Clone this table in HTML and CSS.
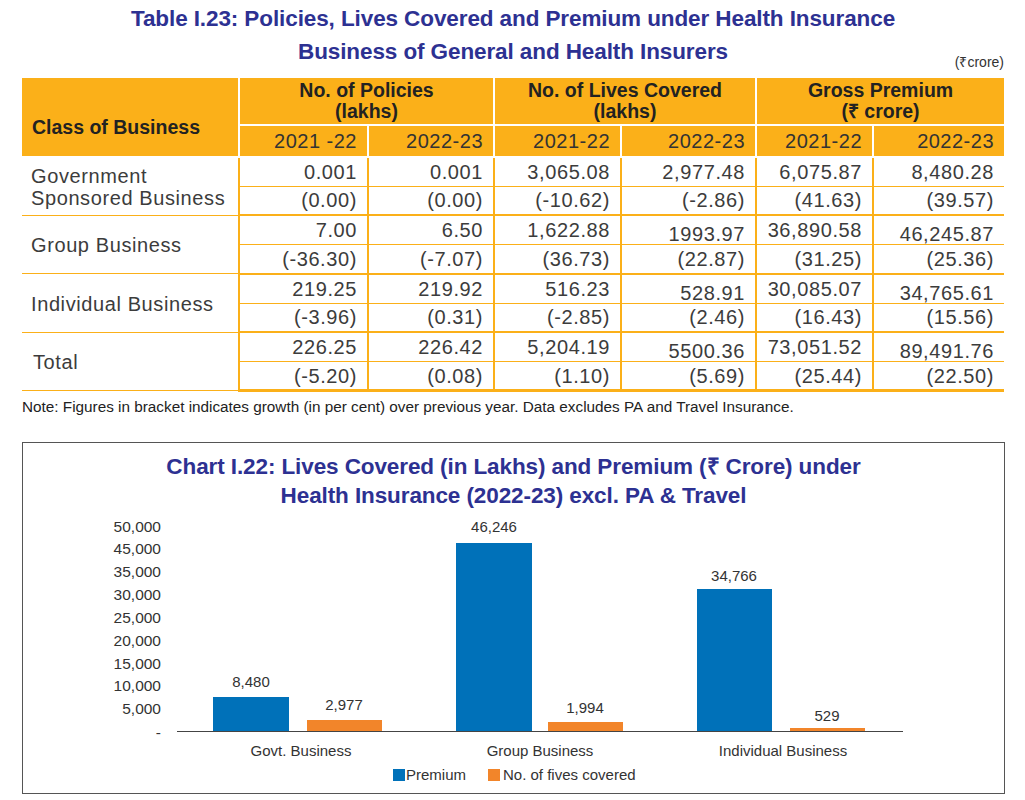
FILE: index.html
```html
<!DOCTYPE html>
<html>
<head>
<meta charset="utf-8">
<link rel="stylesheet" href="styles.css">
</head>
<body>
<div class="page">
  <h1 class="title">Table I.23: Policies, Lives Covered and Premium under Health Insurance<br>Business of General and Health Insurers</h1>
  <div class="unit">(₹crore)</div>
  <table class="tbl">
    <colgroup>
      <col class="c0"><col class="c1"><col class="c2"><col class="c3"><col class="c4"><col class="c5"><col class="c6">
    </colgroup>
    <thead>
      <tr class="h1row">
        <th rowspan="2" class="cls">Class of Business</th>
        <th colspan="2" class="grp">No. of Policies<br>(lakhs)</th>
        <th colspan="2" class="grp">No. of Lives Covered<br>(lakhs)</th>
        <th colspan="2" class="grp last">Gross Premium<br>(₹ crore)</th>
      </tr>
      <tr class="h2row">
        <th class="yr">2021 -22</th><th class="yr">2022-23</th>
        <th class="yr">2021-22</th><th class="yr">2022-23</th>
        <th class="yr">2021-22</th><th class="yr last">2022-23</th>
      </tr>
    </thead>
    <tbody>
      <tr class="top">
        <td rowspan="2" class="lbl">Government<br>Sponsored Business</td>
        <td>0.001</td><td>0.001</td><td>3,065.08</td><td>2,977.48</td><td>6,075.87</td><td class="last">8,480.28</td>
      </tr>
      <tr class="sub">
        <td>(0.00)</td><td>(0.00)</td><td>(-10.62)</td><td>(-2.86)</td><td>(41.63)</td><td class="last">(39.57)</td>
      </tr>
      <tr class="top">
        <td rowspan="2" class="lbl">Group Business</td>
        <td>7.00</td><td>6.50</td><td>1,622.88</td><td class="low">1993.97</td><td>36,890.58</td><td class="last low">46,245.87</td>
      </tr>
      <tr class="sub">
        <td>(-36.30)</td><td>(-7.07)</td><td>(36.73)</td><td>(22.87)</td><td>(31.25)</td><td class="last">(25.36)</td>
      </tr>
      <tr class="top">
        <td rowspan="2" class="lbl">Individual Business</td>
        <td>219.25</td><td>219.92</td><td>516.23</td><td class="low">528.91</td><td>30,085.07</td><td class="last low">34,765.61</td>
      </tr>
      <tr class="sub">
        <td>(-3.96)</td><td>(0.31)</td><td>(-2.85)</td><td>(2.46)</td><td>(16.43)</td><td class="last">(15.56)</td>
      </tr>
      <tr class="top">
        <td rowspan="2" class="lbl total">Total</td>
        <td>226.25</td><td>226.42</td><td>5,204.19</td><td class="low">5500.36</td><td>73,051.52</td><td class="last low">89,491.76</td>
      </tr>
      <tr class="sub end">
        <td>(-5.20)</td><td>(0.08)</td><td>(1.10)</td><td>(5.69)</td><td>(25.44)</td><td class="last">(22.50)</td>
      </tr>
    </tbody>
  </table>
  <p class="note">Note: Figures in bracket indicates growth (in per cent) over previous year. Data excludes PA and Travel Insurance.</p>

  <div class="chart">
    <h2 class="ctitle">Chart I.22: Lives Covered (in Lakhs) and Premium (₹ Crore) under<br>Health Insurance (2022-23) excl. PA &amp; Travel</h2>
    <svg class="plot" width="980" height="283" viewBox="0 0 980 283">
      <g class="ylab">
        <text x="138" y="22">50,000</text>
        <text x="138" y="44">45,000</text>
        <text x="138" y="67">35,000</text>
        <text x="138" y="90">30,000</text>
        <text x="138" y="113">25,000</text>
        <text x="138" y="136">20,000</text>
        <text x="138" y="159">15,000</text>
        <text x="138" y="181">10,000</text>
        <text x="138" y="204">5,000</text>
        <text x="138" y="228">-</text>
      </g>
      <rect class="blue" x="190" y="187" width="76" height="34"/>
      <rect class="orange" x="284" y="210" width="75" height="11"/>
      <rect class="blue" x="433" y="33" width="76" height="188"/>
      <rect class="orange" x="525" y="212" width="75" height="9"/>
      <rect class="blue" x="674" y="79" width="75" height="142"/>
      <rect class="orange" x="767" y="218" width="75" height="3"/>
      <line class="axis" x1="154" y1="221.5" x2="880" y2="221.5"/>
      <g class="vlab">
        <text x="228" y="177">8,480</text>
        <text x="321" y="200">2,977</text>
        <text x="471" y="22">46,246</text>
        <text x="562" y="203">1,994</text>
        <text x="711" y="71">34,766</text>
        <text x="804" y="211">529</text>
      </g>
      <g class="cat">
        <text x="278" y="246">Govt. Business</text>
        <text x="517" y="246">Group Business</text>
        <text x="760" y="246">Individual Business</text>
      </g>
      <rect class="blue" x="370" y="259" width="12" height="12"/>
      <text class="leg" x="383" y="270">Premium</text>
      <rect class="orange" x="465" y="259" width="12" height="12"/>
      <text class="leg" x="480" y="270">No. of fives covered</text>
    </svg>
  </div>
</div>
</body>
</html>
```
FILE: styles.css
```css
* { box-sizing: border-box; }
body {
  margin: 0;
  background: #fff;
  font-family: "Liberation Sans", Arial, sans-serif;
  color: #333;
}
.page {
  width: 1025px;
  padding: 2px 21px 0 22px;
}
.title {
  margin: 0;
  text-align: center;
  font-size: 22.5px;
  line-height: 33px;
  font-weight: bold;
  color: #2d3192;
  letter-spacing: -0.1px;
}
.unit {
  margin-top: -14px;
  text-align: right;
  font-size: 14px;
  line-height: 16px;
  color: #333;
}
.tbl {
  margin-top: 8px;
  width: 982px;
  border-collapse: collapse;
  table-layout: fixed;
}
.c0 { width: 217px; }
.c1 { width: 129px; }
.c2 { width: 126px; }
.c3 { width: 127px; }
.c4 { width: 135px; }
.c5 { width: 117px; }
.c6 { width: 131px; }
.tbl th {
  background: #fbb019;
  border: 2px solid #fff;
  padding: 0;
  color: #222;
}
.h1row th { border-top: 0; }
.tbl th.cls {
  border-left: 0;
  text-align: left;
  padding-left: 10px;
  font-size: 19.5px;
  font-weight: bold;
  padding-top: 20px;
}
.tbl th.grp {
  height: 47px;
  font-size: 19.5px;
  line-height: 21px;
  font-weight: bold;
  text-align: center;
}
.tbl th.yr {
  height: 32px;
  font-size: 20px;
  font-weight: normal;
  text-align: right;
  padding-right: 10px;
  letter-spacing: 0.5px;
  color: #333;
}
.tbl th.last { border-right: 0; }
.tbl td {
  height: 29px;
  padding: 0 10px 0 0;
  text-align: right;
  font-size: 20px;
  line-height: 22px;
  letter-spacing: 0.6px;
  color: #3c3c3c;
  border-left: 2px solid #fbb019;
  border-right: 2px solid #fbb019;
  vertical-align: middle;
}
.tbl tr.top td { border-bottom: 1.5px solid #fbb019; }
.tbl tr.sub td { border-bottom: 2.5px solid #fbb019; }
.tbl tr.end td { border-bottom: 3px solid #fbb019; }
.tbl td.lbl {
  text-align: left;
  border-left: 0;
  border-bottom: 2.5px solid #fbb019;
  padding-left: 9px;
  padding-top: 2px;
  line-height: 22px;
}
.tbl tr.end td, .tbl td.total { border-bottom: 3px solid #fbb019; }
.tbl td.total { padding-left: 11px; }
.tbl td.last { border-right: 0; }
.tbl td.low { padding-top: 8px; line-height: 20px; }
.note {
  margin: 6px 0 0 0;
  font-size: 15.3px;
  line-height: 17px;
  color: #222;
}
.chart {
  margin-top: 27px;
  width: 983px;
  height: 352px;
  border: 1px solid #555;
}
.ctitle {
  margin: 0;
  padding-top: 9px;
  text-align: center;
  font-size: 22.5px;
  line-height: 29px;
  font-weight: bold;
  color: #2d3192;
  letter-spacing: -0.1px;
}
.plot { display: block; }
.plot text {
  font-family: "Liberation Sans", Arial, sans-serif;
  font-size: 15px;
  fill: #333;
}
.ylab text { text-anchor: end; font-size: 15.5px; }
.vlab text, .cat text { text-anchor: middle; }
.blue { fill: #0071b9; }
.orange { fill: #f2852a; }
.axis { stroke: #444; stroke-width: 1.2; }
```
